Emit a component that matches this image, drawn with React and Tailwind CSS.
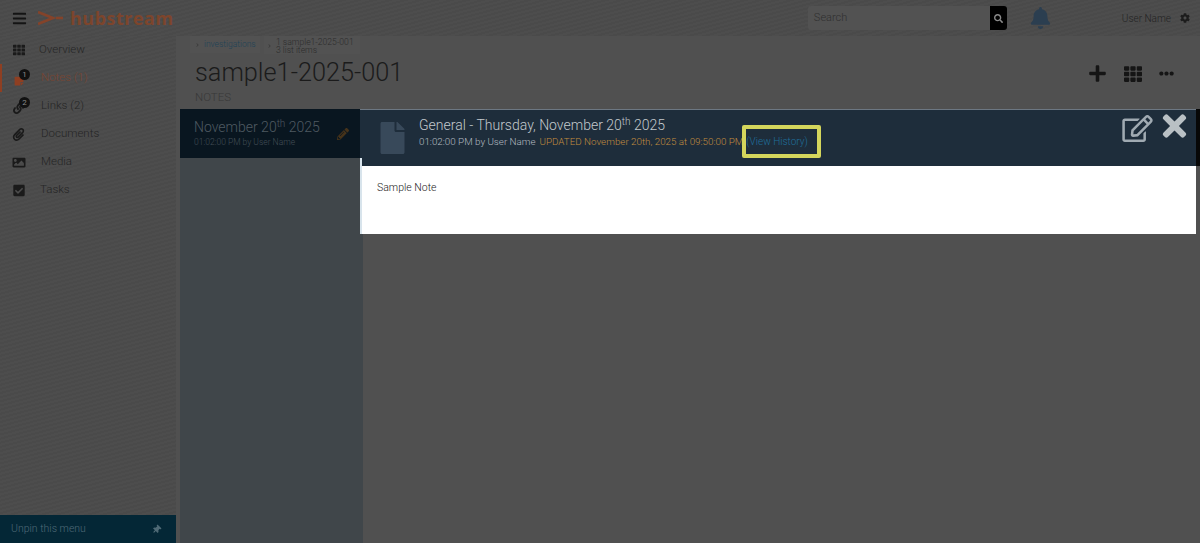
import React from 'react';
import {
  FaBars, FaTh, FaStickyNote, FaLink, FaPaperclip, FaImage, FaCheckSquare, FaFile,
  FaRegEdit, FaTimes, FaPlus, FaEllipsisH, FaBell, FaSearch, FaCog, FaThumbtack, FaPencilAlt, FaChevronRight,
} from 'react-icons/fa';

const stripes = 'bg-[repeating-linear-gradient(165deg,#4a4a4a_0px,#4a4a4a_2px,#4d4d4d_2px,#4d4d4d_4px)]';

const navItems = [
  { label: 'Overview', icon: FaTh, iconClass: 'w-[12px] h-[12px]', textClass: 'ml-[15px]' },
  { label: 'Notes (1)', icon: FaStickyNote, iconClass: 'w-[10px] h-[10px] mt-[6px]', textClass: 'ml-[17px]', active: true, badge: '1' },
  { label: 'Links (2)', icon: FaLink, iconClass: 'w-[12px] h-[12px] mt-[3px]', textClass: 'ml-[17px]', badge: '2' },
  { label: 'Documents', icon: FaPaperclip, iconClass: 'w-[13px] h-[13px]', textClass: 'ml-[17px]' },
  { label: 'Media', icon: FaImage, iconClass: 'w-[14px] h-[13px]', textClass: 'ml-[17px]' },
  { label: 'Tasks', icon: FaCheckSquare, iconClass: 'w-[12px] h-[13px] mt-[1px]', textClass: 'ml-[16px]' },
];

const Header = () => (
  <header className={`h-9 shrink-0 flex items-center ${stripes}`}>
    <FaBars className="ml-3 w-[15px] h-[15px] text-[#141414]" />
    <svg className="ml-[11px] w-[25px] h-[16px]" viewBox="0 0 25 16" fill="none" stroke="#84432a" strokeWidth="2.6">
      <path d="M0 2 L15 8 L0 14" />
      <path d="M18 8 H25" />
    </svg>
    <span className="ml-[7px] font-['Open_Sans'] font-bold text-[18px] tracking-[0.5px] text-[#7d452c]">hubstream</span>
    <div className="ml-auto flex items-center h-[26px]">
      <div className="w-[182px] h-[24px] rounded-l-[3px] bg-[#525252] pl-[6px] flex items-center text-[11px] font-light text-[#2f2f2f]">Search</div>
      <div className="w-[17px] h-[24px] rounded-r-[3px] bg-black flex items-center justify-center">
        <FaSearch className="w-[9px] h-[9px] text-[#8a8a8a]" />
      </div>
    </div>
    <FaBell className="ml-[23px] w-[21px] h-[22px] text-[#2b3e50]" />
    <span className="ml-[71px] text-[10px] font-light text-[#232323]">User Name</span>
    <FaCog className="ml-[9px] mr-[10px] w-[10px] h-[10px] text-[#1c1c1c]" />
  </header>
);

const Sidebar = () => (
  <aside className={`w-[176px] shrink-0 mr-1 flex flex-col ${stripes}`}>
    <nav className="flex flex-col">
      {navItems.map(({ label, icon: Icon, iconClass, textClass, active, badge }) => (
        <div key={label} className={`h-[28px] flex items-center ${active ? 'border-l-2 border-[#8f3f22]' : 'border-l-2 border-transparent'}`}>
          <span className="relative w-[11px] h-[11px] ml-[11px] flex items-center justify-center">
            <Icon className={`shrink-0 ${iconClass} ${active ? 'text-[#8f3f22]' : 'text-[#1a1a1a]'}`} />
            {badge && (
              <span className="absolute -top-[4px] -right-[6px] w-[11px] h-[11px] rounded-full bg-[#111] text-[#8a8a8a] text-[8px] leading-[11px] text-center">{badge}</span>
            )}
          </span>
          <span className={`${textClass} text-[11.5px] font-light ${active ? 'text-[#7a4531]' : 'text-[#252525]'}`}>{label}</span>
        </div>
      ))}
    </nav>
    <div className="mt-auto h-[28px] bg-[#042736] flex items-center justify-between pl-[11px] pr-[15px] text-[10.5px] font-light text-[#4f6a76]">
      <span>Unpin this menu</span>
      <FaThumbtack className="w-[9px] h-[9px] rotate-45" />
    </div>
  </aside>
);

const Breadcrumbs = () => (
  <div className="h-[17px] flex items-start gap-[4px] ml-[10px]">
    <div className="w-[70px] h-[17px] bg-[#525252] flex items-center pl-[6px] gap-[5px] text-[8.5px] font-light text-[#1f4257]">
      <FaChevronRight className="w-[3px] h-[4px] text-[#3a3a3a]" />
      investigations
    </div>
    <div className="w-[96px] h-[18px] bg-[#525252] pl-[4px] pt-[2px] flex items-center gap-[5px] font-light text-[8.6px] leading-[8px] text-[#2c2c2c]">
      <FaChevronRight className="w-[3px] h-[4px] text-[#3a3a3a]" />
      <div>
        <div>1 sample1-2025-001</div>
        <div>3 list items</div>
      </div>
    </div>
  </div>
);

const NoteList = () => (
  <div className="w-[183px] shrink-0 bg-[#40464a]">
    <div className="w-[180px] h-[49px] bg-[#091620] pl-[14px] pt-[9px] relative">
      <div className="text-[14px] font-light leading-[18px] text-[#4f5a62]">
        November 20<sup className="text-[10px]">th</sup> 2025
      </div>
      <div className="text-[8.5px] font-light leading-[11px] mt-[1px] text-[#434e56]">01:02:00 PM by User Name</div>
      <FaPencilAlt className="absolute right-[11px] top-[19px] w-[12px] h-[12px] text-[#46331a]" />
    </div>
  </div>
);

const NoteDetail = () => (
  <div className="-ml-[3px] w-[840px] shrink-0 self-start">
    <div className="flex">
      <div className="w-[836px] h-[57px] bg-[#1e2d3b] border-t border-[#6c7782] flex relative">
        <FaFile className="ml-[20px] mt-[12px] w-[25px] h-[32px] text-[#38495a]" />
        <div className="ml-[14px] pt-[5px]">
          <div className="text-[14px] font-light leading-[20px] text-[#c3c9cd]">
            General - Thursday, November 20<sup className="text-[10px]">th</sup> 2025
          </div>
          <div className="text-[9.8px] font-light leading-[14px] whitespace-nowrap">
            <span className="text-[#b5bcc1]">01:02:00 PM by User Name</span>
            <span className="ml-[4px] text-[#c08c3e]">UPDATED November 20th, 2025 at 09:50:00 PM</span>
            <span className="ml-[3px] text-[10px] text-[#1e6f9c]">(View History)</span>
          </div>
        </div>
        {/* yellow callout drawn on the screenshot */}
        <div className="absolute left-[382px] top-[15px] w-[79px] h-[33px] border-4 border-[#d4d65c] rounded-[2px]" />
        <FaRegEdit className="absolute right-[43px] top-[5px] w-[31px] h-[27px] text-[#a0aab2]" />
        <FaTimes className="absolute right-[9px] -top-px w-[25px] h-[34px] text-[#b9c0c4]" />
        <div className="absolute left-0 top-[48px] bottom-0 w-[2px] bg-[#d8e4ec]" />
      </div>
      <div className="w-1 h-[57px] bg-[#070707]" />
    </div>
    <div className="w-[836px] h-[68px] bg-white border-l-2 border-[#d8e4ec] pl-[15px] pt-[14px] text-[10.5px] font-light text-[#222]">Sample Note</div>
  </div>
);

export default function App() {
  return (
    <div className="w-[1200px] h-[543px] overflow-hidden flex flex-col bg-[#505050] font-['Roboto',sans-serif]">
      <Header />
      <div className="flex flex-1 min-h-0">
        <Sidebar />
        <main className="flex-1 flex flex-col min-w-0">
          <Breadcrumbs />
          <div className="h-[56px] shrink-0 pl-[15px] relative">
            <h1 className="text-[25.3px] leading-[32px] pt-[4px] font-light text-[#1b1b1b]">sample1-2025-001</h1>
            <div className="text-[11.5px] font-light leading-[13px] mt-[2px] text-[#383838]">NOTES</div>
            <div className="absolute right-[26px] top-[11px] flex items-center gap-[17px] text-[#151515]">
              <FaPlus className="w-[19px] h-[19px]" />
              <FaTh className="w-[18px] h-[18px]" />
              <FaEllipsisH className="w-[15px] h-[15px]" />
            </div>
          </div>
          <div className="flex flex-1 min-h-0">
            <NoteList />
            <NoteDetail />
          </div>
        </main>
      </div>
    </div>
  );
}
